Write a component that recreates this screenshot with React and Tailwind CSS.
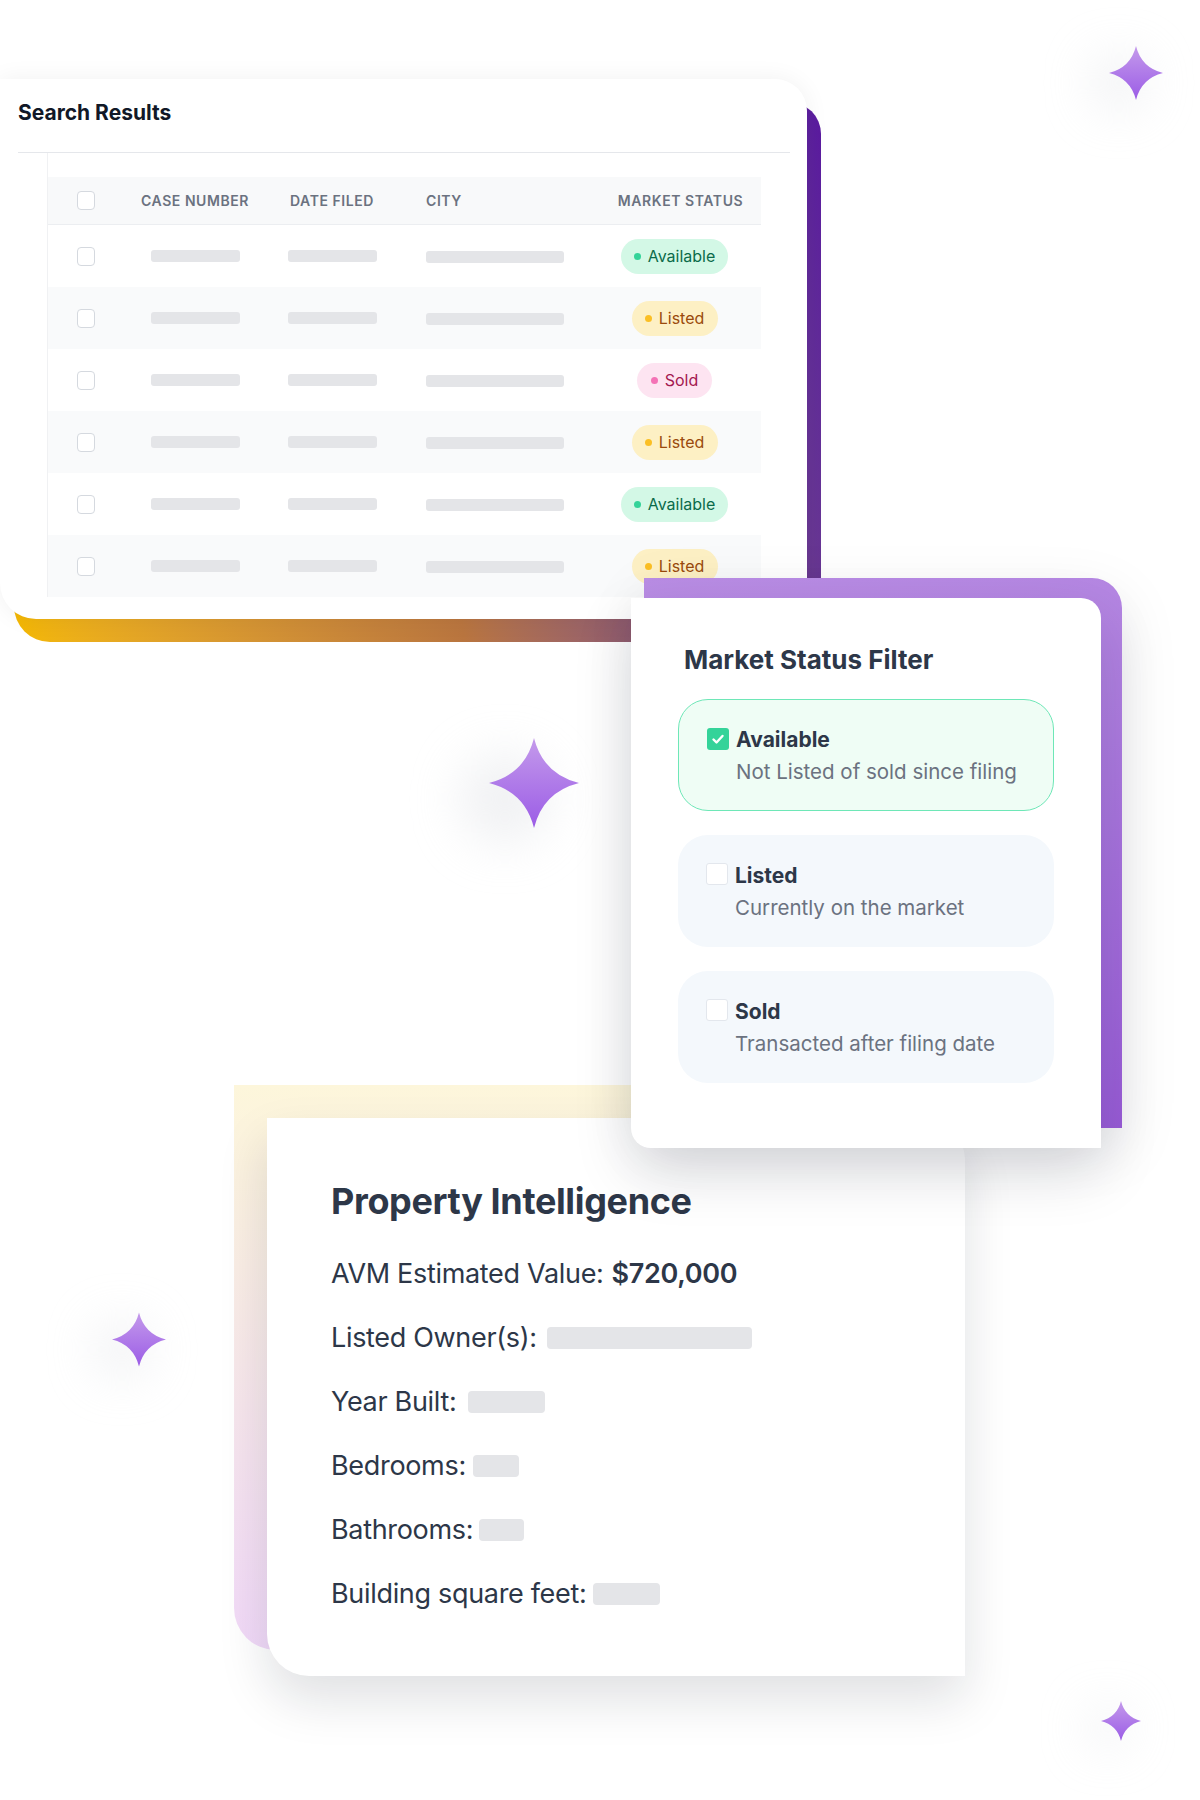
import React from "react";

const STATUS = {
  Available: {
    wrap: "bg-[#d3f8e6] text-[#0b6b4a] w-[107px]",
    dot: "bg-[#34d399]",
  },
  Listed: {
    wrap: "bg-[#fdf0c4] text-[#9a4a0c] w-[86px]",
    dot: "bg-[#fbbf24]",
  },
  Sold: {
    wrap: "bg-[#fde4f1] text-[#a3174f] w-[75px]",
    dot: "bg-[#f472b6]",
  },
};

const ROWS = ["Available", "Listed", "Sold", "Listed", "Available", "Listed"];

function Sparkle({ className, gid }) {
  return (
    <div className={`absolute ${className}`}>
      <div className="absolute left-[-32%] top-[18%] w-full h-full rounded-full bg-[#d9dbe0]/40 blur-xl" />
      <svg viewBox="0 0 100 100" className="relative w-full h-full">
        <defs>
          <linearGradient id={gid} x1="0" y1="0" x2="0" y2="1">
            <stop offset="0" stopColor="#c49aeb" />
            <stop offset="1" stopColor="#9b5ce6" />
          </linearGradient>
        </defs>
        <path
          d="M50 0 Q60 40 100 50 Q60 60 50 100 Q40 60 0 50 Q40 40 50 0Z"
          fill={`url(#${gid})`}
        />
      </svg>
    </div>
  );
}

function Badge({ status }) {
  const s = STATUS[status];
  return (
    <div
      className={`h-[35px] rounded-full flex items-center justify-center gap-[7px] text-[16px] ${s.wrap}`}
    >
      <span className={`w-[7px] h-[7px] rounded-full ${s.dot}`} />
      <span>{status}</span>
    </div>
  );
}

function Box() {
  return (
    <div className="w-[18px] h-[19px] rounded-[4px] border border-[#d5d9df] bg-white" />
  );
}

function Bar({ className }) {
  return <div className={`h-[12px] rounded-[3px] bg-[#e4e5e8] ${className}`} />;
}

function SearchResults() {
  return (
    <div className="absolute left-0 top-[79px] w-[807px] h-[540px] z-10">
      <div className="absolute left-[14px] top-[23px] w-full h-full rounded-tr-[32px] rounded-bl-[36px] bg-linear-80 from-[#f4b800] via-[#b9753f] to-[#5a18a0]" />
      <div className="relative h-full bg-white rounded-tr-[32px] rounded-bl-[36px] shadow-[0_0_24px_rgba(15,23,42,0.06)] pt-[20px] flex flex-col">
        <h2 className="px-[18px] text-[21px] leading-[28px] font-bold text-[#111827]">
          Search Results
        </h2>
        <div className="mt-[25px] ml-[18px] mr-[17px] h-px bg-[#e5e7eb]" />
        <div className="ml-[47px] w-[714px] pt-[24px] border-l border-[#f0f1f3]">
          <div className="grid grid-cols-[75px_144px_130px_190px_175px] h-[48px] items-center bg-[#f8f9fa] text-[14px] font-semibold tracking-[0.04em] text-[#6b7280] border-b border-[#eceef1]">
            <div className="flex justify-center">
              <Box />
            </div>
            <div className="text-center">CASE NUMBER</div>
            <div className="text-center">DATE FILED</div>
            <div className="pl-[29px]">CITY</div>
            <div className="text-center pl-[12px]">MARKET STATUS</div>
          </div>
          {ROWS.map((st, i) => (
            <div
              key={i}
              className={`grid grid-cols-[75px_144px_130px_190px_175px] h-[62px] items-center ${
                i % 2 === 1 ? "bg-[#f9fafb]" : "bg-white"
              }`}
            >
              <div className="flex justify-center">
                <Box />
              </div>
              <div className="flex justify-center">
                <Bar className="w-[89px]" />
              </div>
              <div className="flex justify-center">
                <Bar className="w-[89px]" />
              </div>
              <div className="pl-[29px] pt-[2px]">
                <Bar className="w-[138px]" />
              </div>
              <div className="flex justify-center">
                <Badge status={st} />
              </div>
            </div>
          ))}
        </div>
      </div>
    </div>
  );
}

function Check({ on }) {
  if (!on) {
    return (
      <div className="mt-[2px] w-[22px] h-[22px] shrink-0 rounded-[3px] border border-[#e3e7ed] bg-white" />
    );
  }
  return (
    <div className="mt-[2px] w-[22px] h-[22px] shrink-0 rounded-[3px] bg-[#34d399] flex items-center justify-center">
      <svg viewBox="0 0 22 22" className="w-[22px] h-[22px]">
        <path
          d="M6.5 11.5l3 3 6-6.5"
          fill="none"
          stroke="white"
          strokeWidth="2.4"
          strokeLinecap="round"
          strokeLinejoin="round"
        />
      </svg>
    </div>
  );
}

const OPTIONS = [
  { title: "Available", sub: "Not Listed of sold since filing", on: true },
  { title: "Listed", sub: "Currently on the market", on: false },
  { title: "Sold", sub: "Transacted after filing date", on: false },
];

function FilterCard() {
  return (
    <div className="absolute left-[631px] top-[598px] w-[470px] h-[550px] z-30">
      <div className="absolute left-[13px] top-[-20px] right-[-21px] bottom-[20px] rounded-tr-[30px] bg-linear-170 from-[#b98de4] to-[#985bd6] shadow-[0_20px_60px_rgba(15,23,42,0.10)]" />
      <div className="relative h-full bg-white rounded-tr-[20px] rounded-bl-[20px] shadow-[0_24px_60px_rgba(15,23,42,0.14)] px-[47px] pt-[46px]">
        <h3 className="pl-[6px] text-[26px] leading-[32px] font-bold text-[#2d3748]">
          Market Status Filter
        </h3>
        <div className="mt-[23px] flex flex-col gap-[24px]">
          {OPTIONS.map((o) => (
            <div
              key={o.title}
              className={`h-[112px] rounded-[30px] pt-[26px] pl-[28px] flex gap-[7px] ${
                o.on
                  ? "bg-[#effdf5] border border-[#6ee7b7]"
                  : "bg-[#f4f8fc]"
              }`}
            >
              <Check on={o.on} />
              <div className={o.on ? "-mt-px" : ""}>
                <div className="text-[21px] leading-[30px] font-bold text-[#2d3748]">
                  {o.title}
                </div>
                <div className="mt-[2px] text-[20.5px] leading-[30px] text-[#6b7280]">
                  {o.sub}
                </div>
              </div>
            </div>
          ))}
        </div>
      </div>
    </div>
  );
}

function Skel({ className }) {
  return <span className={`inline-block h-[22px] rounded-[4px] bg-[#e4e5e8] ${className}`} />;
}

function PropertyCard() {
  return (
    <div className="absolute left-[267px] top-[1118px] w-[698px] h-[558px] z-20">
      <div className="absolute left-[-33px] top-[-33px] right-[33px] bottom-[26px] rounded-bl-[42px] bg-linear-to-b from-[#fdf6db] to-[#f1d9f8]" />
      <div className="relative h-full bg-white rounded-tr-[42px] rounded-bl-[42px] shadow-[0_24px_50px_rgba(15,23,42,0.13)] pt-[63px] pl-[64px] text-[#2d3748] tracking-[-0.02em]">
        <h3 className="text-[36px] leading-[40px] font-bold tracking-[-0.01em]">
          Property Intelligence
        </h3>
        <div className="mt-[21px] flex flex-col text-[27px]">
          <div className="h-[64px] flex items-center">
            <span>AVM Estimated Value:</span>
            <span className="ml-[8px] font-semibold">$720,000</span>
          </div>
          <div className="h-[64px] flex items-center">
            <span>Listed Owner(s):</span>
            <Skel className="ml-[10px] w-[205px]" />
          </div>
          <div className="h-[64px] flex items-center">
            <span>Year Built:</span>
            <Skel className="ml-[12px] w-[77px]" />
          </div>
          <div className="h-[64px] flex items-center">
            <span>Bedrooms:</span>
            <Skel className="ml-[7px] w-[46px]" />
          </div>
          <div className="h-[64px] flex items-center">
            <span>Bathrooms:</span>
            <Skel className="ml-[6px] w-[45px]" />
          </div>
          <div className="h-[64px] flex items-center">
            <span>Building square feet:</span>
            <Skel className="ml-[7px] w-[67px]" />
          </div>
        </div>
      </div>
    </div>
  );
}

export default function App() {
  return (
    <div className="relative w-[1200px] h-[1800px] bg-white overflow-hidden font-['Inter','Liberation_Sans',sans-serif]">
      <Sparkle gid="sp1" className="left-[1109px] top-[46px] w-[54px] h-[54px]" />
      <Sparkle gid="sp2" className="left-[489px] top-[738px] w-[90px] h-[90px]" />
      <Sparkle gid="sp3" className="left-[112px] top-[1312px] w-[54px] h-[55px]" />
      <Sparkle gid="sp4" className="left-[1101px] top-[1701px] w-[40px] h-[40px]" />
      <SearchResults />
      <PropertyCard />
      <FilterCard />
    </div>
  );
}
